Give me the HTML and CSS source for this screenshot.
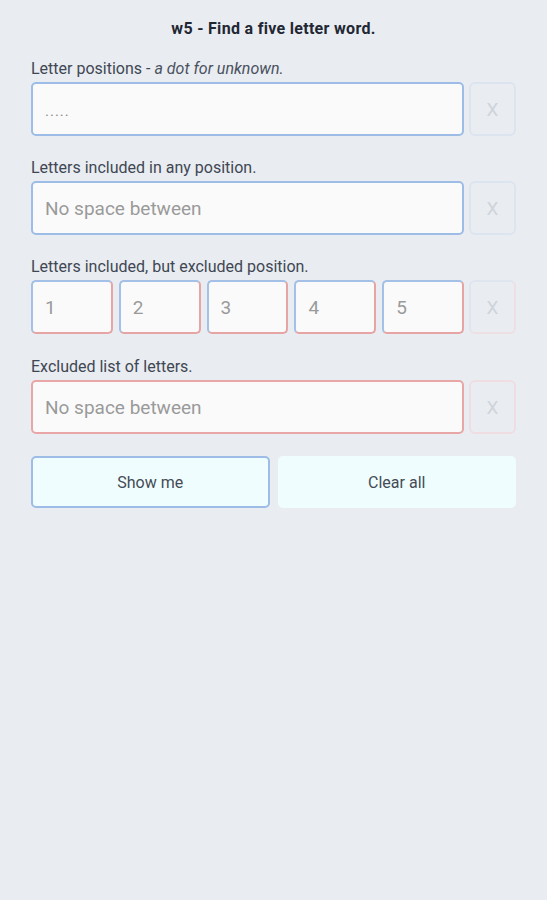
FILE: index.html
```html
<!DOCTYPE html>
<html>
<head>
<meta charset="utf-8">
<link rel="stylesheet" href="styles.css">
</head>
<body>
<main class="page">
  <h1 class="title">w5 - Find a five letter word.</h1>

  <section class="field">
    <label class="label">Letter positions - <i>a dot for unknown.</i></label>
    <div class="row">
      <div class="input blue dots">.....</div>
      <div class="clear blue-faint">X</div>
    </div>
  </section>

  <section class="field">
    <label class="label">Letters included in any position.</label>
    <div class="row">
      <div class="input blue">No space between</div>
      <div class="clear blue-faint">X</div>
    </div>
  </section>

  <section class="field">
    <label class="label">Letters included, but excluded position.</label>
    <div class="row">
      <div class="boxes">
        <div class="input mixed">1</div>
        <div class="input mixed">2</div>
        <div class="input mixed">3</div>
        <div class="input mixed">4</div>
        <div class="input mixed">5</div>
      </div>
      <div class="clear mixed-faint">X</div>
    </div>
  </section>

  <section class="field">
    <label class="label">Excluded list of letters.</label>
    <div class="row">
      <div class="input red">No space between</div>
      <div class="clear red-faint">X</div>
    </div>
  </section>

  <div class="actions">
    <button class="btn btn-primary">Show me</button>
    <button class="btn">Clear all</button>
  </div>
</main>
</body>
</html>
```
FILE: styles.css
```css
html, body {
  margin: 0;
  padding: 0;
  background: #e9ecf1;
  font-family: Roboto, "Noto Sans", sans-serif;
}
.page {
  padding: 18px 31px 0 31px;
}
.title {
  margin: 0 0 19px 0;
  text-align: center;
  font-size: 16px;
  font-weight: 700;
  letter-spacing: 0.3px;
  color: #1f2733;
  line-height: 22px;
}
.field {
  margin-bottom: 22px;
}
.field:nth-of-type(3) {
  margin-bottom: 23px;
}
.label {
  display: block;
  font-size: 16px;
  line-height: 20px;
  color: #3f4753;
  margin-bottom: 3px;
}
.label i { color: #4a525e; }
.row {
  display: flex;
  gap: 5px;
  height: 54px;
}
.input {
  flex: 1;
  box-sizing: border-box;
  background: #fafafa;
  border: 2px solid #9dbde6;
  border-radius: 5px;
  padding-left: 12px;
  display: flex;
  align-items: center;
  font-size: 19px;
  color: #9a9a9a;
}
.input.dots {
  font-size: 15px;
  letter-spacing: 1px;
  padding-top: 4px;
  color: #8a8a8a;
}
.input.red { border-color: #e9a6a6; }
.input.mixed {
  border-top-color: #a4c0e6;
  border-left-color: #a4c0e6;
  border-right-color: #e6a4a4;
  border-bottom-color: #e6a4a4;
  flex: 1;
  min-width: 0;
}
.boxes {
  flex: 1;
  display: flex;
  gap: 6px;
}
.clear {
  width: 47px;
  box-sizing: border-box;
  border: 2px solid #dfe5ee;
  border-radius: 6px;
  display: flex;
  align-items: center;
  justify-content: center;
  font-size: 19px;
  color: #cfd4da;
  background: #e9edf2;
}
.blue-faint { border-color: #dce4f0; }
.red-faint { border-color: #efdde1; }
.mixed-faint {
  border-top-color: #dfe5ef;
  border-left-color: #dfe5ef;
  border-right-color: #eedfe3;
  border-bottom-color: #eedfe3;
}
.actions {
  display: flex;
  gap: 8px;
  margin-top: 4px;
}
.btn {
  flex: 1;
  height: 52px;
  box-sizing: border-box;
  background: #f0fdff;
  border: 2px solid #f0fdff;
  border-radius: 5px;
  font-family: Roboto, "Noto Sans", sans-serif;
  font-size: 16px;
  color: #444b55;
  padding: 0;
}
.btn-primary {
  border-color: #9dbde6;
}
```
